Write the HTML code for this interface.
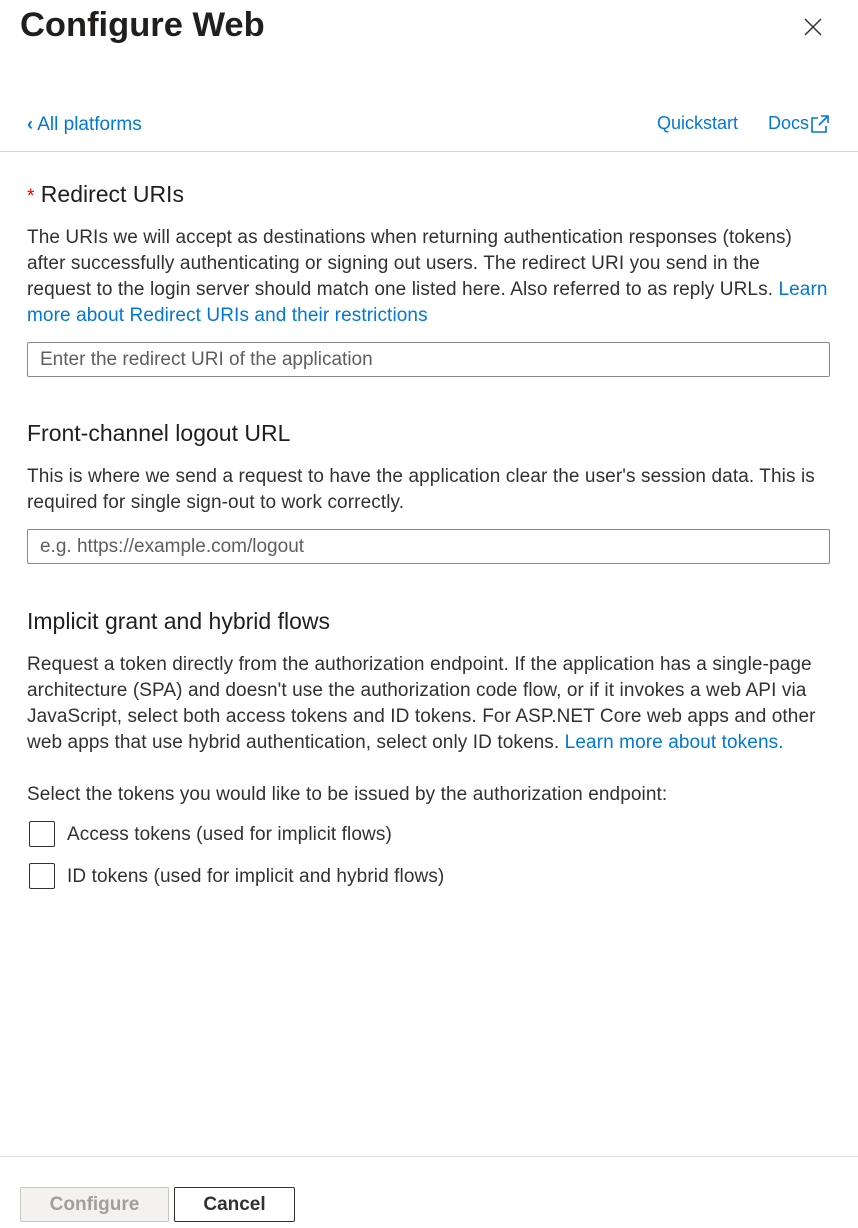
<!DOCTYPE html>
<html><head><meta charset="utf-8"><style>
*{margin:0;padding:0;box-sizing:border-box}
body{width:858px;height:1228px;background:#fff;font-family:"Liberation Sans",sans-serif;color:#323130;position:relative;overflow:hidden}
.a{position:absolute;white-space:nowrap}
.t{font-size:34.5px;left:20px;top:6px;color:#201f1e;font-weight:600;letter-spacing:0px}
.l{color:#0078d4}
.h{font-size:23px;left:27px;color:#201f1e}
.p{font-size:19px;left:27px;line-height:26px;letter-spacing:0.1px}
.in{position:absolute;left:27px;width:803px;height:35px;border:1px solid #8a8886;border-radius:2px;font-size:19px;color:#605e5c;padding:6px 12px}
.cb{position:absolute;left:29px;width:26px;height:26px;border:1px solid #323130;border-radius:2px}
.btn{position:absolute;top:1187px;height:35px;border-radius:2px;font-size:19px;font-weight:600;text-align:center;line-height:33px}
</style></head><body>
<div class="a t">Configure Web</div>
<svg class="a" style="left:803px;top:17px" width="20" height="20" viewBox="0 0 20 20"><path d="M2 2L18 18M18 2L2 18" stroke="#323130" stroke-width="1.5"/></svg>
<div class="a l" style="left:27px;top:114px;font-size:19px"><span style="font-size:18px;font-weight:bold">&#x2039;</span> All platforms</div>
<div class="a l" style="left:657px;top:113px;font-size:18px">Quickstart</div>
<div class="a l" style="left:768px;top:113px;font-size:18px">Docs</div>
<svg class="a" style="left:810px;top:114px" width="20" height="20" viewBox="0 0 20 20"><path d="M8 4H2v14h14v-6M11 2h7v7M18 2L9 11" stroke="#0078d4" stroke-width="1.6" fill="none"/></svg>
<div class="a" style="left:0;top:151px;width:858px;height:1px;background:#d6d6d6"></div>
<div class="a h" style="top:181px"><span style="color:#e00;font-size:19px">*</span> Redirect URIs</div>
<div class="a p" style="top:225px">The URIs we will accept as destinations when returning authentication responses (tokens)<br>after successfully authenticating or signing out users. The redirect URI you send in the<br>request to the login server should match one listed here. Also referred to as reply URLs. <span class="l">Learn</span><br><span class="l">more about Redirect URIs and their restrictions</span></div>
<div class="in" style="top:342px">Enter the redirect URI of the application</div>
<div class="a h" style="top:420px">Front-channel logout URL</div>
<div class="a p" style="top:464px">This is where we send a request to have the application clear the user's session data. This is<br>required for single sign-out to work correctly.</div>
<div class="in" style="top:529px">e.g. https://example.com/logout</div>
<div class="a h" style="top:608px">Implicit grant and hybrid flows</div>
<div class="a p" style="top:652px">Request a token directly from the authorization endpoint. If the application has a single-page<br>architecture (SPA) and doesn't use the authorization code flow, or if it invokes a web API via<br>JavaScript, select both access tokens and ID tokens. For ASP.NET Core web apps and other<br>web apps that use hybrid authentication, select only ID tokens. <span class="l">Learn more about tokens.</span></div>
<div class="a p" style="top:782px">Select the tokens you would like to be issued by the authorization endpoint:</div>
<div class="cb" style="top:821px"></div>
<div class="a p" style="left:67px;top:822px">Access tokens (used for implicit flows)</div>
<div class="cb" style="top:863px"></div>
<div class="a p" style="left:67px;top:864px">ID tokens (used for implicit and hybrid flows)</div>
<div class="a" style="left:0;top:1156px;width:858px;height:1px;background:#e1dfdd"></div>
<div class="btn" style="left:20px;width:149px;background:#f3f2f1;border:1px solid #c8c6c4;color:#a19f9d">Configure</div>
<div class="btn" style="left:174px;width:121px;background:#fff;border:1px solid #323130;color:#323130">Cancel</div>
</body></html>
